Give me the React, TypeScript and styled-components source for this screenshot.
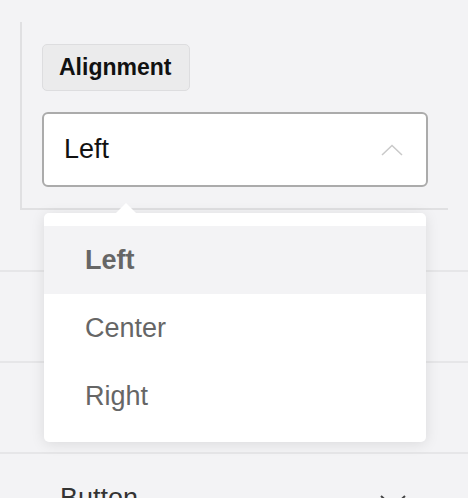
import React from "react";
import styled, { createGlobalStyle } from "styled-components";

const GlobalStyle = createGlobalStyle`
  html, body { margin: 0; padding: 0; }
  body {
    background: #f3f3f5;
    font-family: "Liberation Sans", Arial, sans-serif;
  }
`;

const Page = styled.div`
  width: 468px;
  height: 498px;
  overflow: hidden;
  background: #f3f3f5;
`;

const ExpandedSection = styled.div`
  padding: 22px 20px 0 20px;
  height: 248px;
  border-bottom: 2px solid #e6e6e8;
`;

const Panel = styled.div`
  border-left: 2px solid #e0e0e2;
  border-bottom: 2px solid #e0e0e2;
  padding: 22px 20px 21px 20px;
  display: flex;
  flex-direction: column;
  align-items: flex-start;
  gap: 21px;
`;

const Badge = styled.div`
  height: 45px;
  padding: 0 18px 0 16px;
  display: flex;
  align-items: center;
  background: #ebebec;
  border: 1px solid #dddddf;
  border-radius: 5px;
  font-weight: 700;
  font-size: 23px;
  color: #111;
`;

const SelectWrap = styled.div`
  position: relative;
  align-self: stretch;
`;

const SelectBox = styled.div`
  height: 71px;
  border: 2px solid #ababab;
  border-radius: 6px;
  background: #fff;
  display: flex;
  align-items: center;
  justify-content: space-between;
  padding: 0 23px 0 20px;
  font-size: 27px;
  color: #111;
`;

const Menu = styled.div`
  position: absolute;
  left: 2px;
  right: 2px;
  top: 101px;
  background: #fff;
  border-radius: 5px;
  padding: 13px 0 12px;
  box-shadow: 0 2px 14px rgba(0, 0, 0, 0.1);
  z-index: 5;

  &::before {
    content: "";
    position: absolute;
    top: -10px;
    left: 72px;
    border-left: 10px solid transparent;
    border-right: 10px solid transparent;
    border-bottom: 10px solid #fff;
  }
`;

const MenuItem = styled.div<{ $active?: boolean }>`
  height: 68px;
  display: flex;
  align-items: center;
  padding-left: 41px;
  font-size: 27px;
  color: #666;
  font-weight: ${(p) => (p.$active ? 700 : 400)};
  background: ${(p) => (p.$active ? "#f3f3f5" : "#fff")};
`;

const Row = styled.div`
  height: 89px;
  border-bottom: 2px solid #e6e6e8;
`;

const LabelRow = styled.div`
  display: flex;
  align-items: flex-start;
  justify-content: space-between;
  padding: 29px 62px 0 60px;
  font-size: 27px;
  color: #333;
`;

const ChevronUp = () => (
  <svg width="22" height="12" viewBox="0 0 22 12" fill="none">
    <polyline points="1,11 11,1.5 21,11" stroke="#c9c9c9" strokeWidth="1.5" />
  </svg>
);

const ChevronDown = () => (
  <svg width="26" height="14" viewBox="0 0 26 14" fill="none" style={{ marginTop: 12 }}>
    <polyline points="1,1 13,12 25,1" stroke="#444" strokeWidth="2" />
  </svg>
);

export default function App() {
  return (
    <>
      <GlobalStyle />
      <Page>
        <ExpandedSection>
          <Panel>
            <Badge>Alignment</Badge>
            <SelectWrap>
              <SelectBox>
                <span>Left</span>
                <ChevronUp />
              </SelectBox>
              <Menu>
                <MenuItem $active>Left</MenuItem>
                <MenuItem>Center</MenuItem>
                <MenuItem>Right</MenuItem>
              </Menu>
            </SelectWrap>
          </Panel>
        </ExpandedSection>
        <Row />
        <Row />
        <LabelRow>
          <span>Button</span>
          <ChevronDown />
        </LabelRow>
      </Page>
    </>
  );
}
